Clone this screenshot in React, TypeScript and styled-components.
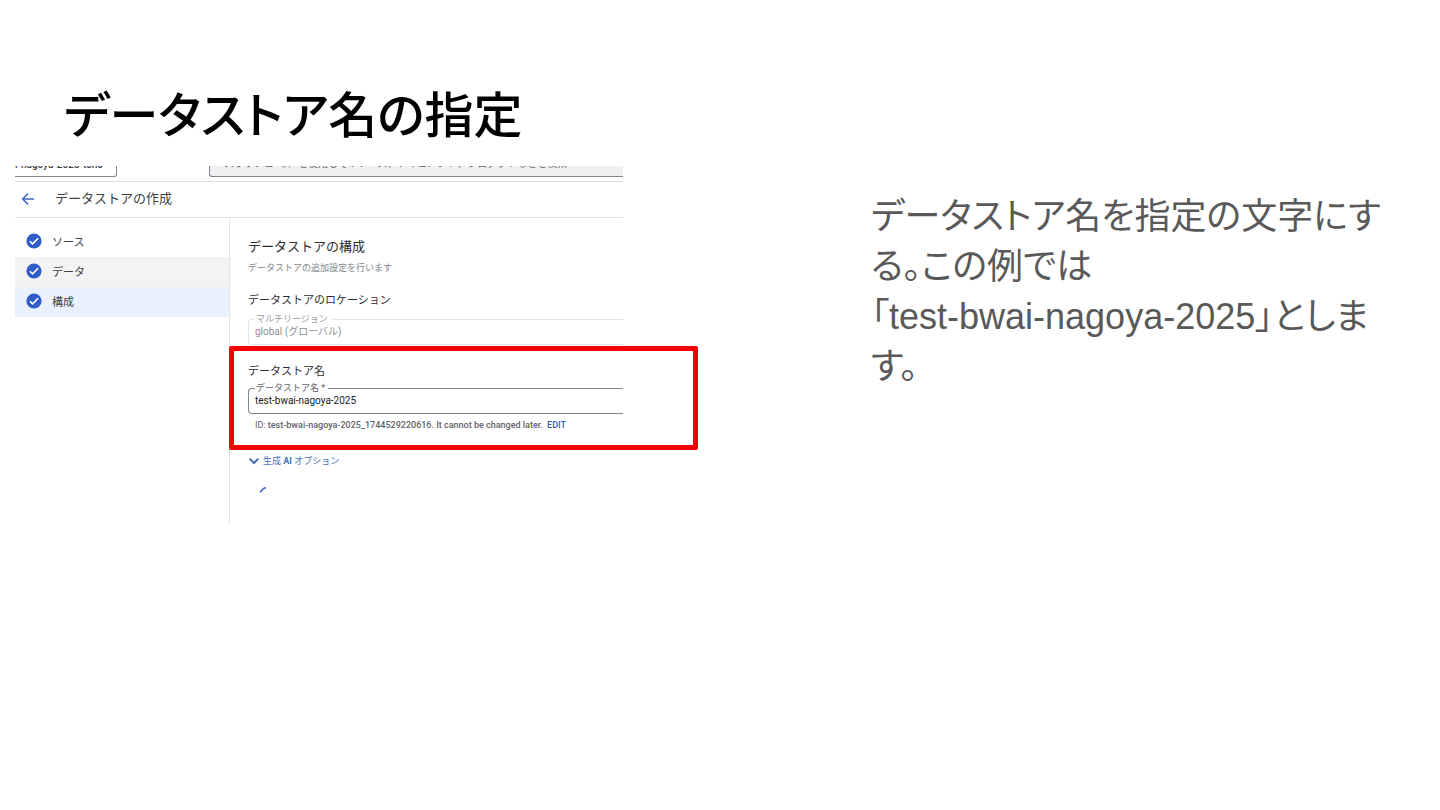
import React from "react";
import styled, { createGlobalStyle } from "styled-components";

const GlobalStyle = createGlobalStyle`
  *, *::before, *::after { box-sizing: border-box; }
  body { margin: 0; background: #fff; }
`;

const slideFont = `"Liberation Sans", "Noto Sans CJK JP", sans-serif`;
const consoleFont = `Roboto, "Noto Sans CJK JP", sans-serif`;

const Slide = styled.main`
  min-height: 100vh;
  padding: 80px 48px 0 15px;
  font-family: ${slideFont};
  font-feature-settings: "palt";
`;

const Title = styled.h1`
  margin: 0 0 14px 49px;
  font-size: 49px;
  line-height: 72px;
  font-weight: 500;
  color: #000;
`;

const Columns = styled.div`
  display: grid;
  grid-template-columns: minmax(0, 608fr) minmax(0, 521fr);
  column-gap: 248px;
  align-items: start;
`;

const Description = styled.p`
  margin: 26px 0 0;
  font-size: 36px;
  line-height: 50px;
  color: #595959;
`;

const Keep = styled.span`
  display: inline-block;
  white-space: nowrap;
`;

const Console = styled.section`
  font-family: ${consoleFont};
  font-feature-settings: normal;
  color: #3c4043;
`;

const TopBar = styled.div`
  display: flex;
  align-items: flex-end;
  gap: 92px;
  height: 16px;
  padding-bottom: 4px;
  overflow: hidden;
  border-bottom: 1px solid #dadce0;
`;

const ProjectButton = styled.button`
  flex: none;
  width: 102px;
  height: 28px;
  padding: 4px 0 0;
  border: 1px solid #80868b;
  border-left: 0;
  border-radius: 0 3px 3px 0;
  background: #fff;
  font: 500 10px/16px ${consoleFont};
  color: #3c4043;
  text-align: left;
`;

const SearchBox = styled.input`
  flex: 1;
  min-width: 0;
  height: 28px;
  padding: 0 14px;
  border: 1px solid #80868b;
  border-right: 0;
  border-radius: 3px 0 0 3px;
  background: #eff0f2;
  font: 400 10px/16px ${consoleFont};
  color: #5f6368;
  &::placeholder { color: #5f6368; opacity: 1; }
`;

const Header = styled.header`
  display: flex;
  align-items: center;
  gap: 20px;
  height: 36px;
  padding: 0 0 2px 6px;
  border-bottom: 1px solid #dfe1e4;
`;

const IconButton = styled.button`
  display: flex;
  padding: 0;
  border: 0;
  background: none;
  color: #3f6cc0;
`;

const PageName = styled.h2`
  margin: 0;
  font-size: 13px;
  line-height: 20px;
  font-weight: 400;
`;

const Body = styled.div`
  display: grid;
  grid-template-columns: 214px minmax(0, 1fr);
  min-height: 306px;
`;

const Steps = styled.ol`
  margin: 0;
  padding: 9px 0 0;
  list-style: none;
`;

const Step = styled.li<{ $fill?: string }>`
  display: flex;
  align-items: center;
  gap: 10px;
  height: 30px;
  padding: 0 0 2px 11px;
  background: ${(p) => p.$fill ?? "transparent"};
  font-size: 11px;
  font-weight: 400;
`;

const Form = styled.form`
  padding: 19px 0 0 18px;
  border-left: 1px solid #e3e4e8;
`;

const FormTitle = styled.h3`
  margin: 0;
  font-size: 13px;
  line-height: 20px;
  font-weight: 400;
  color: #2b2d30;
`;

const Hint = styled.p`
  margin: 3px 0 15px;
  font-size: 9px;
  line-height: 16px;
  color: #80868b;
`;

const Heading = styled.h4`
  margin: 0;
  font-size: 11px;
  line-height: 20px;
  font-weight: 400;
  color: #2b2d30;
`;

const Field = styled.fieldset<{ $muted?: boolean }>`
  min-width: 0;
  height: 32px;
  margin: ${(p) => (p.$muted ? "2px" : "0")} 0 0;
  padding: 0 0 0 6px;
  border: 1px solid ${(p) => (p.$muted ? "#e3e4e6" : "#80868b")};
  border-right: 0;
  border-radius: 4px 0 0 4px;
  color: ${(p) => (p.$muted ? "#8d9196" : "#202124")};
`;

const Legend = styled.legend<{ $muted?: boolean }>`
  padding: 0 3px 0 1px;
  font-size: 9px;
  line-height: 12px;
  color: ${(p) => (p.$muted ? "#9a9da1" : "#5f6368")};
`;

const FieldInput = styled.input`
  display: block;
  width: 100%;
  height: 14px;
  padding: 0;
  border: 0;
  outline: 0;
  background: transparent;
  font: 400 10px/14px ${consoleFont};
  color: inherit;
`;

const NameGroup = styled.div`
  position: relative;
  margin-top: 17px;
`;

const Highlight = styled.div`
  position: absolute;
  top: -16px;
  left: -19px;
  right: -75px;
  height: 104px;
  border: 5px solid #f80000;
  border-radius: 2px;
  pointer-events: none;
`;

const IdNote = styled.p`
  margin: 3px 0 0 7px;
  font-size: 9px;
  line-height: 16px;
  color: #5f6368;
`;

const IdText = styled.span`
  font-weight: 500;
`;

const EditLink = styled.a`
  margin-left: 2px;
  font-weight: 500;
  color: #3460bd;
  text-decoration: none;
`;

const OptionsToggle = styled.button`
  display: flex;
  align-items: center;
  gap: 3px;
  margin-top: 20px;
  padding: 0;
  border: 0;
  background: none;
  font: 400 9px/16px ${consoleFont};
  color: #476fb4;
  white-space: pre;
`;

const Spinner = styled.svg`
  display: block;
  margin: 17px 0 0 11px;
`;

const CheckIcon = () => (
  <svg width="16" height="16" viewBox="0 0 16 16" aria-hidden="true">
    <circle cx="8" cy="8" r="7.6" fill="#2f5cc8" />
    <path d="M3.9 8.2l2.7 2.7 5.5-5.6" fill="none" stroke="#fff" strokeWidth="1.6" />
  </svg>
);

export default function App() {
  return (
    <>
      <GlobalStyle />
      <Slide>
        <Title>データストア名の指定</Title>
        <Columns>
          <Console>
            <TopBar>
              <ProjectButton type="button">i-nagoya-2025-tono</ProjectButton>
              <SearchBox
                type="search"
                aria-label="検索"
                placeholder="スラッシュ（/）を使用してリソース、ドキュメント、プロダクトなどを検索"
              />
            </TopBar>
            <Header>
              <IconButton type="button" aria-label="戻る">
                <svg width="14" height="14" viewBox="0 0 14 14" fill="none" stroke="currentColor" strokeWidth="1.5">
                  <path d="M13 7H2M7 1.6L1.6 7 7 12.4" />
                </svg>
              </IconButton>
              <PageName>データストアの作成</PageName>
            </Header>
            <Body>
              <Steps>
                <Step><CheckIcon />ソース</Step>
                <Step $fill="#f3f3f3"><CheckIcon />データ</Step>
                <Step $fill="#e9f1fd"><CheckIcon />構成</Step>
              </Steps>
              <Form>
                <FormTitle>データストアの構成</FormTitle>
                <Hint>データストアの追加設定を行います</Hint>
                <Heading>データストアのロケーション</Heading>
                <Field $muted>
                  <Legend $muted><label htmlFor="region">マルチリージョン</label></Legend>
                  <FieldInput id="region" readOnly value="global (グローバル)" />
                </Field>
                <NameGroup>
                  <Heading>データストア名</Heading>
                  <Field>
                    <Legend><label htmlFor="store">データストア名 *</label></Legend>
                    <FieldInput id="store" defaultValue="test-bwai-nagoya-2025" />
                  </Field>
                  <IdNote>
                    ID: <IdText>test-bwai-nagoya-2025_1744529220616. It cannot be changed later.</IdText>{" "}
                    <EditLink href="#edit">EDIT</EditLink>
                  </IdNote>
                  <Highlight />
                </NameGroup>
                <OptionsToggle type="button">
                  <svg width="12" height="12" viewBox="0 0 12 12" fill="none" stroke="currentColor" strokeWidth="2">
                    <path d="M1.6 3.6L6 8l4.4-4.4" />
                  </svg>
                  <span>生成 <b>AI</b> オプション</span>
                </OptionsToggle>
                <Spinner width="10" height="8" viewBox="0 0 10 8" fill="none" aria-hidden="true">
                  <path d="M1.2 6.4Q3 2.6 7 1.4" stroke="#4474bd" strokeWidth="1.6" />
                </Spinner>
              </Form>
            </Body>
          </Console>
          <Description>
            データストア名を指定の文字にする。この例では<Keep>「test-bwai-nagoya-2025」</Keep>とします。
          </Description>
        </Columns>
      </Slide>
    </>
  );
}
